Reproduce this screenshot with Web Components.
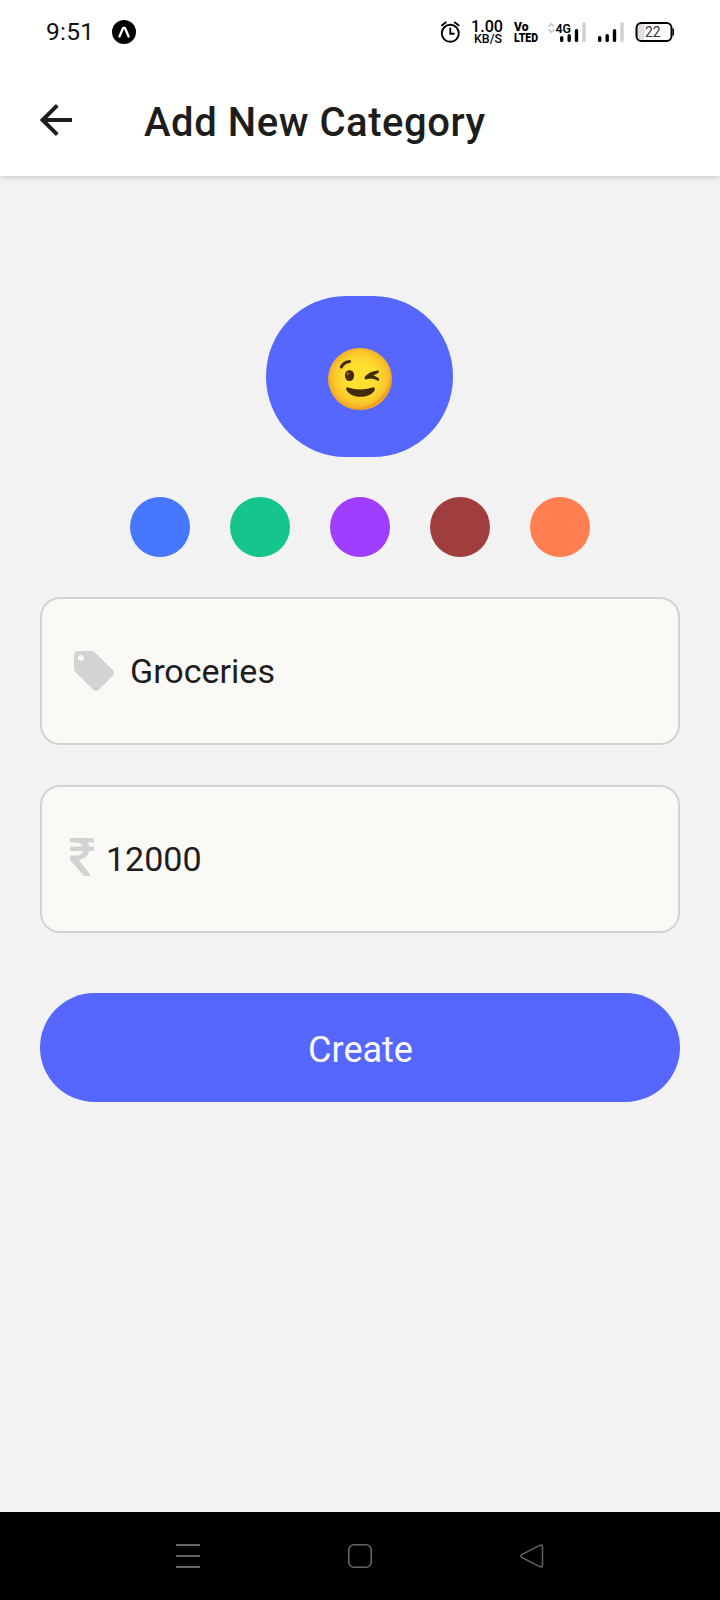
<!DOCTYPE html>
<html lang="en">
<head>
<meta charset="utf-8">
<title>Add New Category</title>
<style>
html,body{margin:0;height:100%}
body{font-family:Roboto,sans-serif;color:#1d1d1d;background:#f2f2f2}
</style>
</head>
<body>
<category-screen></category-screen>
<script>
const define = (name, css, html) => customElements.define(name, class extends HTMLElement {
  constructor() {
    super();
    const t = document.createElement('template');
    t.innerHTML = `<style>*{box-sizing:border-box}svg{display:block;flex:none}${css}</style>${html}`;
    this.attachShadow({mode: 'open'}).append(t.content.cloneNode(true));
  }
});

define('status-bar', `
:host{display:flex;height:64px;background:#fff;color:#000;padding:0 46px;align-items:center;justify-content:space-between;position:relative;z-index:1}
.side{display:flex;align-items:center;height:64px}
`, `
<div class="side">
  <svg width="100" height="64" viewBox="46 0 100 64">
    <text x="46" y="40.300" font-family="Roboto" font-weight="400" font-size="24.500" textLength="48" lengthAdjust="spacing" fill="#111">9:51</text>
    <circle cx="124" cy="32" r="12"/>
    <path d="M119.500 36.500l3.600-8.500h1.900l3.600 8.500" fill="none" stroke="#fff" stroke-width="2.300" stroke-linejoin="round" stroke-linecap="round"/>
  </svg>
</div>
<div class="side">
  <svg width="236" height="64" viewBox="438 0 236 64">
    <g fill="none" stroke="#000" stroke-width="1.900" stroke-linecap="round">
      <circle cx="450.300" cy="33.300" r="8.500"/><path d="M450.300 28.500v5.300h3.500M442 25.300l3.700-2.900M454.900 22.400l3.700 2.900"/>
    </g>
    <text x="471" y="31.800" font-family="Roboto" font-weight="500" font-size="16" textLength="32" lengthAdjust="spacingAndGlyphs">1.00</text>
    <text x="474" y="43" font-family="Roboto" font-weight="500" font-size="12.500" textLength="28" lengthAdjust="spacingAndGlyphs">KB/S</text>
    <text x="514" y="31.300" font-family="Roboto" font-weight="900" font-size="12.500" textLength="14.500" lengthAdjust="spacingAndGlyphs">Vo</text>
    <text x="514" y="42.200" font-family="Roboto" font-weight="900" font-size="13" textLength="24" lengthAdjust="spacingAndGlyphs">LTED</text>
    <path d="M548.500 26.500l2.700-2.700 2.700 2.700M548.500 29.500l2.700 2.700 2.700-2.700" fill="none" stroke="#c9c9c9" stroke-width="1.700"/>
    <text x="555.500" y="33" font-family="Roboto" font-weight="600" font-size="13.500" textLength="15.500" lengthAdjust="spacingAndGlyphs">4G</text>
    <g stroke="#000" stroke-width="3.400" stroke-linecap="round">
      <path d="M561.700 37.800v2.600M569.200 35.700v4.700M576.500 30.600v9.800M599.700 37.800v2.600M607.200 35.700v4.700M614.500 30.600v9.800"/>
      <path stroke="#cfcfcf" d="M584 23.800v16.600M622 23.800v16.600"/>
    </g>
    <path d="M644.500 23h-3.500a4 4 0 0 0-4 4v8.500a4 4 0 0 0 4 4h3.500z" fill="#e0e0e0"/>
    <rect x="636.500" y="23" width="35" height="18" rx="4.800" fill="none" stroke="#000" stroke-width="2"/>
    <path d="M672.500 28.500h1.500v7h-1.500z"/>
    <text x="645" y="36.800" font-family="Roboto" font-size="13.800" fill="#333" textLength="15.500" lengthAdjust="spacingAndGlyphs">22</text>
  </svg>
</div>`);

define('app-bar', `
:host{display:flex;height:112px;background:#fff;align-items:center;padding:0 40px;gap:71px;box-shadow:0 1px 6px rgba(0,0,0,.18)}
h1{margin:5px 0 0;font:500 40px/48px Roboto,sans-serif;letter-spacing:.55px;white-space:nowrap}
`, `
<svg width="33" height="34" viewBox="40 103 33 34"><path d="M72 120H43M57.300 105.300L42.600 120l14.700 14.700" fill="none" stroke="#1d1d1d" stroke-width="3.900"/></svg>
<h1><slot></slot></h1>`);

define('emoji-badge', `
:host{display:grid;place-items:center;width:187px;height:161px;border-radius:80px;background:#5567ff;margin-left:226px}
svg{margin:5px 0 0 1px}
`, `
<svg width="64" height="62" viewBox="0 0 64 62">
<defs><radialGradient id="g" cx=".5" cy=".48" r=".52"><stop offset=".45" stop-color="#fde030"/><stop offset=".78" stop-color="#fbc82c"/><stop offset="1" stop-color="#f4a223"/></radialGradient></defs>
<ellipse cx="32" cy="31" rx="32" ry="31" fill="url(#g)"/>
<path d="M63.300 24Q66 42 51 54Q37 64 20 60.500Q46 62 57 44Q63 34 63.300 24z" fill="#e48c15" opacity=".45"/>
<ellipse cx="21.500" cy="27.500" rx="4.600" ry="5.600" fill="#422b0d"/>
<ellipse cx="19.900" cy="25.600" rx="1.400" ry="1.700" fill="#896024"/>
<path d="M13.300 19Q15.500 14.300 21.500 13.400" fill="none" stroke="#422b0d" stroke-width="3" stroke-linecap="round"/>
<path d="M49.500 22.400C43 23 37.500 27 36.600 29.500c-.4 1.600.6 2.200 2.200 1.800 3.800-.9 7.500-.5 10.800 1.400 1.700.7 2.200-1.400.8-2.600-1.600-1.400-3.300-2.200-5-2.700 1.700-.8 3.400-1.600 4.700-2.500 1.500-1.200 1-2.600-.6-2.500z" fill="#422b0d"/>
<path d="M20 39.400q12 4 24.500 0c2.400-.4 2.700 1.300 2 3-5.200 8.500-22.500 8.500-27.800 0-.9-1.900-.6-3.500 1.300-3z" fill="#422b0d"/>
</svg>`);

define('color-swatch', `:host{display:block;width:60px;height:60px;border-radius:50%;background:var(--swatch)}`, ``);

define('color-picker', `:host{display:flex;justify-content:center;gap:40px}`, `
<color-swatch style="--swatch:#4677ff"></color-swatch>
<color-swatch style="--swatch:#16c48d"></color-swatch>
<color-swatch style="--swatch:#9f3eff"></color-swatch>
<color-swatch style="--swatch:#9f3d3f"></color-swatch>
<color-swatch style="--swatch:#ff7f50"></color-swatch>`);

define('text-field', `
:host{display:flex;align-items:center;height:148px;border:2px solid #d3d3d3;border-radius:20px;background:#faf9f6;padding-left:var(--pad,28px);gap:var(--gap,12px);font:400 34px/40px Roboto,sans-serif}
`, `<slot name="icon"></slot><slot></slot>`);

define('tag-icon', `:host{display:block;width:40px;height:40px}`, `
<svg width="40" height="40" viewBox="2 2 20 20"><path fill="#d3d3d3" d="M21.410 11.580l-9-9C12.050 2.220 11.550 2 11 2H4c-1.100 0-2 .9-2 2v7c0 .55.22 1.050.59 1.420l9 9c.36.36.86.58 1.410.58.55 0 1.050-.22 1.410-.59l7-7c.37-.36.59-.86.59-1.410 0-.55-.23-1.060-.59-1.420zM5.500 7C4.670 7 4 6.330 4 5.500S4.670 4 5.500 4 7 4.670 7 5.500 6.330 7 5.500 7z"/></svg>`);

define('rupee-icon', `:host{display:block;width:24px;height:38px;margin-bottom:4px}`, `
<svg width="24" height="38" viewBox="0 0 24 38"><path fill="#d3d3d3" d="M.8 0H23.200Q24 0 24 .8V3.800Q24 4.600 23.200 4.600H17.300Q18.700 6.300 19.200 8.400H23.200Q24 8.400 24 9.200V12.200Q24 13 23.200 13H19.200C18.300 18.200 14.600 21.200 8.800 21.700L20.200 36.700Q20.700 38 19.700 38H15Q14.200 38 13.700 37.400L.4 22.500Q0 22 0 21.300V18.300Q0 17.500 .8 17.500H5.500C9.700 17.500 12.200 16 13 13H.8Q0 13 0 12.200V9.200Q0 8.400 .8 8.400H12.500C11.300 5.900 9 4.600 5.200 4.600H.8Q0 4.600 0 3.800V.8Q0 0 .8 0z"/></svg>`);

define('primary-button', `
:host{display:block}
button{display:block;width:100%;height:109px;border:0;border-radius:54.500px;background:#5567ff;color:#faf9f6;font:400 36px/42px Roboto,sans-serif;padding:5px 0 0 1px}
`, `<button><slot></slot></button>`);

define('nav-bar', `
:host{display:flex;height:88px;background:#000;align-items:center;justify-content:center;gap:148px}
`, `
<svg width="24" height="24" viewBox="0 0 24 24"><path d="M0 1h24M0 12h24M0 23h24" stroke="#666" stroke-width="2"/></svg>
<svg width="24" height="24" viewBox="0 0 24 24"><rect x=".8" y=".8" width="22.400" height="22.400" rx="5" fill="none" stroke="#666" stroke-width="1.600"/></svg>
<svg width="24" height="24" viewBox="0 0 24 24"><path d="M1.700 10.700L20.200 1.200Q22.500 .6 22.500 2.800V21.200Q22.500 23.400 20.200 22.800L1.700 13.300Q.1 12 1.700 10.700z" fill="none" stroke="#666" stroke-width="1.500"/></svg>`);

define('category-screen', `
:host{display:flex;flex-direction:column;width:720px;height:1600px;background:#f2f2f2;overflow:hidden}
main{flex:1;display:flex;flex-direction:column;gap:40px;padding:120px 40px 0}
primary-button{margin-top:20px}
`, `
<status-bar></status-bar>
<app-bar>Add New Category</app-bar>
<main>
  <emoji-badge></emoji-badge>
  <color-picker></color-picker>
  <text-field style="--pad:32px;--gap:16px"><tag-icon slot="icon"></tag-icon><span>Groceries</span></text-field>
  <text-field><rupee-icon slot="icon"></rupee-icon><span>12000</span></text-field>
  <primary-button>Create</primary-button>
</main>
<nav-bar></nav-bar>`);
</script>
</body>
</html>
